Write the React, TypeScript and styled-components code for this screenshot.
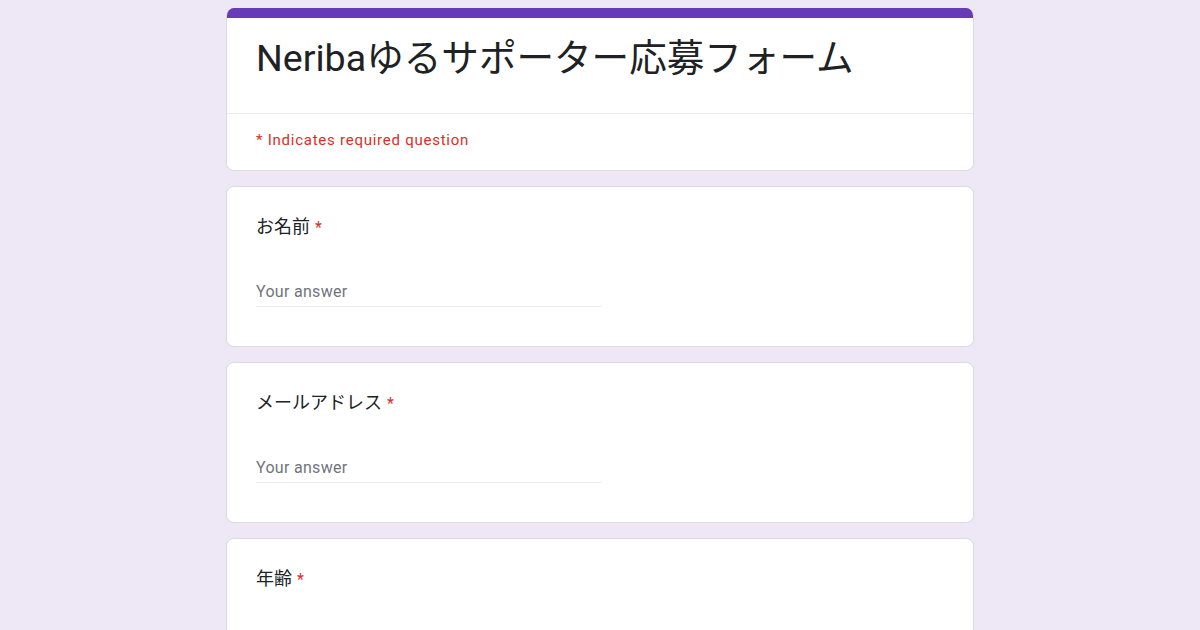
import React from "react";
import styled, { createGlobalStyle } from "styled-components";

const GlobalStyle = createGlobalStyle`
  html, body { margin: 0; padding: 0; }
  body {
    background: #ede7f6;
    font-family: Roboto, "Noto Sans CJK JP", sans-serif;
    color: #202124;
  }
`;

const Page = styled.div`
  width: 748px;
  margin: 0 auto;
  padding-top: 8px;
  display: flex;
  flex-direction: column;
  gap: 15px;
`;

const Card = styled.div`
  background: #fff;
  border: 1px solid #dadce0;
  border-radius: 8px;
  overflow: hidden;
`;

const HeaderCard = styled(Card)`
  border-top: none;
`;

const Band = styled.div`
  height: 10px;
  background: #673ab7;
`;

const TitleBlock = styled.div`
  padding: 16px 29px 31px;
  border-bottom: 1px solid #e8eaed;
`;

const Title = styled.h1`
  margin: 0;
  font-size: 37.6px;
  font-weight: 400;
  line-height: 48px;
  color: #202124;
`;

const Required = styled.div`
  padding: 16px 29px 20px;
  font-size: 15px;
  line-height: 20px;
  color: #d93025;
  letter-spacing: 0.75px;
`;

const Question = styled(Card)`
  padding: 28px 29px 39px;
  min-height: 90px;
`;

const Label = styled.div`
  font-size: 18px;
  line-height: 24px;
  color: #202124;
  display: flex;
  gap: 5px;
  align-items: baseline;
`;

const Star = styled.span`
  color: #d93025;
  font-size: 16px;
`;

const Answer = styled.div`
  margin-top: 42px;
  width: 345px;
  padding-bottom: 4px;
  border-bottom: 1px solid #e8eaed;
  font-size: 16px;
  line-height: 20px;
  color: #70757a;
  letter-spacing: 0.3px;
`;

const questions = ["お名前", "メールアドレス", "年齢"];

export default function App() {
  return (
    <>
      <GlobalStyle />
      <Page>
        <HeaderCard>
          <Band />
          <TitleBlock>
            <Title>Neribaゆるサポーター応募フォーム</Title>
          </TitleBlock>
          <Required>* Indicates required question</Required>
        </HeaderCard>
        {questions.map((q, i) => (
          <Question key={q}>
            <Label>
              {q}
              <Star>*</Star>
            </Label>
            {i < 2 && <Answer>Your answer</Answer>}
          </Question>
        ))}
      </Page>
    </>
  );
}
